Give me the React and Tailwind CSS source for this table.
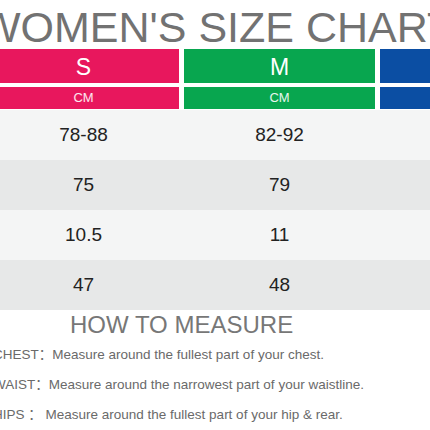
export default function App() {
  const cols = [
    { size: 'S', bg: 'bg-[#e8175d]' },
    { size: 'M', bg: 'bg-[#08a64f]' },
    { size: 'L', bg: 'bg-[#0b4ea3]' },
  ]

  const rows = [
    ['78-88', '82-92'],
    ['75', '79'],
    ['10.5', '11'],
    ['47', '48'],
  ]

  const tips = [
    { label: 'CHEST：', text: 'Measure around the fullest part of your chest.' },
    { label: 'WAIST：', text: 'Measure around the narrowest part of your waistline.' },
    { label: 'HIPS ： ', text: 'Measure around the fullest part of your hip & rear.' },
  ]

  return (
    <div className="w-[430px] h-[430px] overflow-hidden bg-white font-['Liberation_Sans','Noto_Sans_CJK_SC',sans-serif]">

      {/* TITLE */}
      <div className="h-[49px] pt-[6px] ml-[-20px] whitespace-nowrap text-[43px] leading-[43px] text-[#727272]">
        WOMEN'S SIZE CHART
      </div>

      {/* SIZE HEADERS */}
      <div className="flex gap-[5px] ml-[-12px] w-max">
        {cols.map((c) => (
          <div key={c.size} className="w-[191px] flex flex-col gap-[4px]">
            <div className={`h-[34px] ${c.bg} flex items-center justify-center pt-[3px] text-[23px] text-white`}>
              {c.size !== 'L' && c.size}
            </div>
            <div className={`h-[22px] ${c.bg} flex items-center justify-center text-[13px] text-white/90`}>
              {c.size !== 'L' && 'CM'}
            </div>
          </div>
        ))}
      </div>

      {/* VALUES */}
      <div className="mt-[1px]">
        {rows.map((r, i) => (
          <div key={i} className={`h-[50px] flex items-center gap-[5px] ml-[-12px] ${i % 2 ? 'bg-[#e7e8e8]' : 'bg-[#f4f5f5]'}`}>
            {r.map((v, j) => (
              <div key={j} className="w-[191px] text-center text-[19px] text-[#222]">
                {v}
              </div>
            ))}
          </div>
        ))}
      </div>

      {/* HOW TO MEASURE */}
      <div className="mt-[3px] pl-[70px] text-[24px] leading-[24px] text-[#777] whitespace-nowrap">
        HOW TO MEASURE
      </div>

      <div className="mt-[3px] ml-[-7px]">
        {tips.map((t) => (
          <div key={t.label} className="h-[30px] leading-[30px] text-[13.5px] text-[#6a6a6a] whitespace-pre">
            {t.label}{t.text}
          </div>
        ))}
      </div>

    </div>
  )
}
